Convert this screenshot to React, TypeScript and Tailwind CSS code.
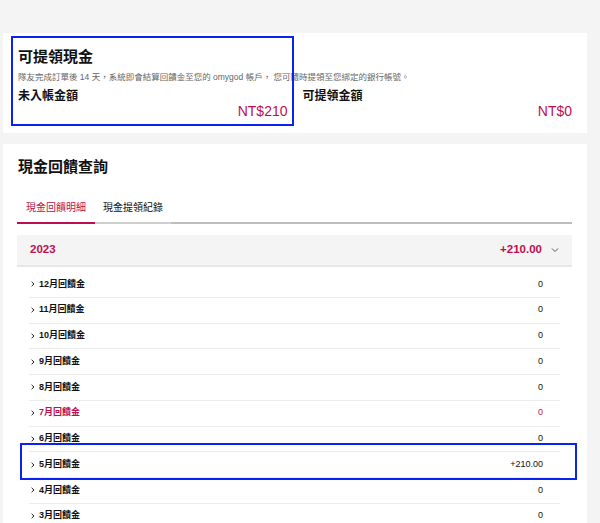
import React from "react";

type MonthRow = {
  label: string;
  value: string;
  active?: boolean;
};

const rows: MonthRow[] = [
  { label: "12月回饋金", value: "0" },
  { label: "11月回饋金", value: "0" },
  { label: "10月回饋金", value: "0" },
  { label: "9月回饋金", value: "0" },
  { label: "8月回饋金", value: "0" },
  { label: "7月回饋金", value: "0", active: true },
  { label: "6月回饋金", value: "0" },
  { label: "5月回饋金", value: "+210.00" },
  { label: "4月回饋金", value: "0" },
  { label: "3月回饋金", value: "0" },
];

const font = "font-['Liberation_Sans','Noto_Sans_CJK_TC',sans-serif]";

export default function App() {
  return (
    <div className={`relative h-[523px] overflow-hidden bg-[#f4f4f4] pt-[33px] pl-[3px] pr-[13px] ${font}`}>
      {/* summary card */}
      <div className="h-[100px] bg-white px-[15px] pt-[14px]">
        <h2 className="text-[15px] leading-[20px] font-semibold text-[#111]">可提領現金</h2>
        <p className="mt-[3px] text-[8.5px] leading-[14px] text-[#666] whitespace-nowrap">
          隊友完成訂單後 14 天，系統即會結算回饋金至您的 omygod 帳戶， 您可隨時提領至您綁定的銀行帳號。
        </p>
        <div className="mt-[5px] grid grid-cols-2 gap-[15px]">
          <Balance label="未入帳金額" amount="NT$210" />
          <Balance label="可提領金額" amount="NT$0" />
        </div>
      </div>

      {/* history card */}
      <div className="mt-[11px] bg-white pl-[14px] pr-[15px] pt-[13px] pb-4">
        <h2 className="pl-px text-[15px] leading-[20px] font-semibold text-[#111]">現金回饋查詢</h2>

        <div className="mt-[24px] flex text-[10px] leading-[14px]">
          <div className="border-b-2 border-[#bd0f4f] px-[9px] pb-[7px] text-[#bd0f4f]">現金回饋明細</div>
          <div className="border-b-2 border-[#cfcfcf] px-[8px] pb-[7px] text-[#111]">現金提領紀錄</div>
          <div className="flex-1 border-b-2 border-[#bdbdbd]" />
        </div>

        <div className="mt-[11px] flex h-[32px] items-center border-b-2 border-[#e7e7e7] bg-[#f4f4f4] pl-[13px] pr-[13px] text-[11.5px] font-bold text-[#bd0f4f]">
          <span>2023</span>
          <span className="ml-auto">+210.00</span>
          <svg className="ml-[9px] h-[6px] w-[8px]" viewBox="0 0 8 6" fill="none">
            <polyline points="1,1.5 4,4.5 7,1.5" stroke="#555" strokeWidth="1" />
          </svg>
        </div>

        <div className="mx-[12px] mt-[5px]">
          {rows.map((row) => (
            <div
              key={row.label}
              className={`flex h-[25.75px] items-center border-b border-[#ececec] pl-[2px] pr-[17px] text-[9px] ${
                row.active ? "text-[#bd0f4f]" : "text-[#111]"
              }`}
            >
              <svg className="h-[6px] w-[4px]" viewBox="0 0 4 6" fill="none">
                <polyline points="0.6,0.8 3,3 0.6,5.2" stroke="#222" strokeWidth="1" />
              </svg>
              <span className="ml-[4px] font-bold">{row.label}</span>
              <span className="ml-auto">{row.value}</span>
            </div>
          ))}
        </div>
      </div>

      {/* annotation boxes */}
      <div className="pointer-events-none absolute left-[11px] top-[36px] h-[90px] w-[283px] border-2 border-[#0b22f0]" />
      <div className="pointer-events-none absolute left-[20px] top-[443px] h-[37px] w-[557px] border-2 border-[#0b22f0]" />
    </div>
  );
}

function Balance({ label, amount }: { label: string; amount: string }) {
  return (
    <div>
      <div className="text-[12px] leading-[15px] font-bold text-[#111]">{label}</div>
      <div className="text-right text-[14px] leading-[15px] text-[#bd0f4f]">{amount}</div>
    </div>
  );
}
